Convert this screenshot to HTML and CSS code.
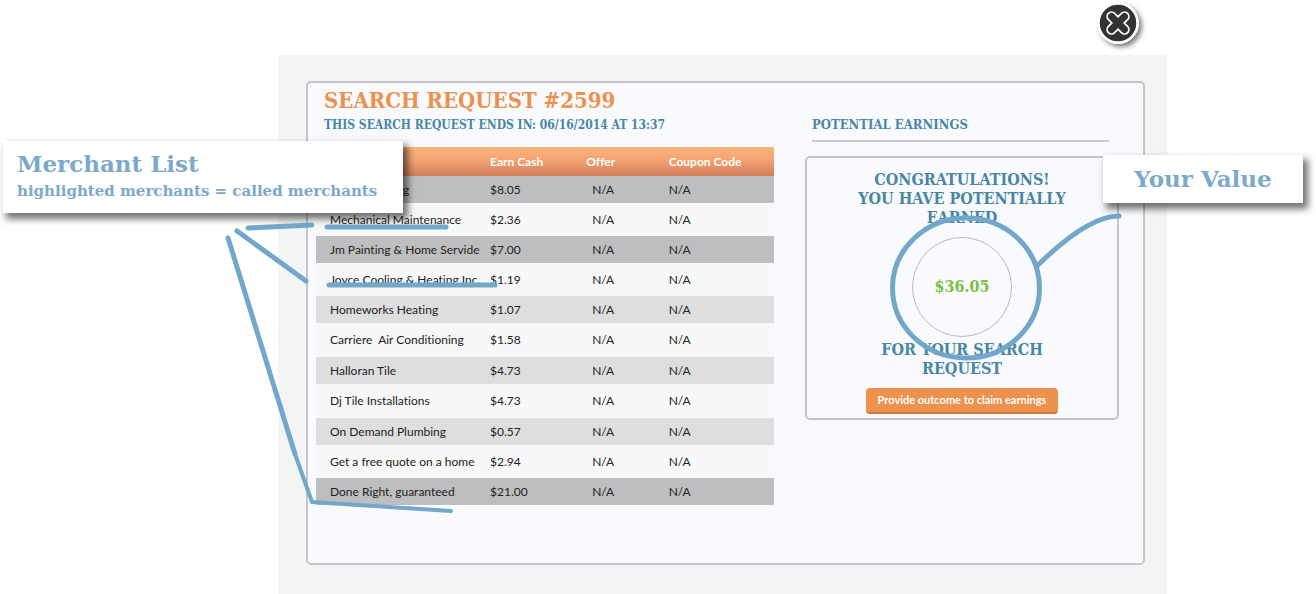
FILE: index.html
```html
<!DOCTYPE html>
<html lang="en">
<head>
<meta charset="utf-8">
<title>Search Request #2599</title>
<link rel="stylesheet" href="styles.css">
</head>
<body>
<main class="page">
  <div class="panel">
    <button class="close" type="button" aria-label="Close">
      <svg width="42" height="42" viewBox="0 0 42 42" aria-hidden="true">
        <circle cx="21" cy="21" r="19.500" fill="#333" stroke="#fff" stroke-width="2.500"/>
        <path d="M14.500 14.500 L27.500 27.500 M27.500 14.500 L14.500 27.500" stroke="#fff" stroke-width="10.500" stroke-linecap="round"/>
        <path d="M14.500 14.500 L27.500 27.500 M27.500 14.500 L14.500 27.500" stroke="#333" stroke-width="7" stroke-linecap="round"/>
      </svg>
    </button>
    <section class="sheet">
      <header class="heading">
        <h1 class="title">SEARCH REQUEST #2599</h1>
      </header>
      <p class="subtitle ends">THIS SEARCH REQUEST ENDS IN: 06/16/2014 AT 13:37</p>
      <h2 class="subtitle earnings-title">POTENTIAL EARNINGS</h2>
      <table class="merchants">
        <colgroup><col class="c-name"><col class="c-cash"><col class="c-offer"><col class="c-code"></colgroup>
        <thead><tr><td></td><th scope="col">Earn Cash</th><th scope="col">Offer</th><th scope="col">Coupon Code</th></tr></thead>
        <tbody>
          <tr class="called"><td class="covered">g</td><td>$8.05</td><td>N/A</td><td>N/A</td></tr>
          <tr><td>Mechanical Maintenance</td><td>$2.36</td><td>N/A</td><td>N/A</td></tr>
          <tr class="called"><td>Jm Painting &amp; Home Servide</td><td>$7.00</td><td>N/A</td><td>N/A</td></tr>
          <tr><td>Joyce Cooling &amp; Heating Inc.</td><td>$1.19</td><td>N/A</td><td>N/A</td></tr>
          <tr class="shaded"><td>Homeworks Heating</td><td>$1.07</td><td>N/A</td><td>N/A</td></tr>
          <tr class="tall"><td>Carriere&nbsp; Air Conditioning</td><td>$1.58</td><td>N/A</td><td>N/A</td></tr>
          <tr class="shaded"><td>Halloran Tile</td><td>$4.73</td><td>N/A</td><td>N/A</td></tr>
          <tr class="tall"><td>Dj Tile Installations</td><td>$4.73</td><td>N/A</td><td>N/A</td></tr>
          <tr class="shaded"><td>On Demand Plumbing</td><td>$0.57</td><td>N/A</td><td>N/A</td></tr>
          <tr><td>Get a free quote on a home</td><td>$2.94</td><td>N/A</td><td>N/A</td></tr>
          <tr class="called"><td>Done Right, guaranteed</td><td>$21.00</td><td>N/A</td><td>N/A</td></tr>
        </tbody>
      </table>
      <div class="card">
        <p class="message">CONGRATULATIONS!<br>YOU HAVE POTENTIALLY<br>EARNED</p>
        <div class="amount">$36.05</div>
        <p class="message">FOR YOUR SEARCH<br>REQUEST</p>
        <button class="claim" type="button">Provide outcome to claim earnings</button>
        <svg class="ring" width="240" height="160" viewBox="0 0 240 160" aria-hidden="true">
          <ellipse cx="82" cy="83" rx="73.500" ry="70"/>
          <path d="M154 60 Q204 11 235 11"/>
        </svg>
      </div>
    </section>
    <aside class="callout callout-list">
      <p class="callout-title">Merchant List</p>
      <p class="callout-note">highlighted merchants = called merchants</p>
    </aside>
    <aside class="callout callout-value"><p class="callout-title">Your Value</p></aside>
    <svg class="lines" width="280" height="300" viewBox="220 220 280 300" aria-hidden="true">
      <path d="M248 228 L312 225 M237 231 L306 281 M327 227 H446 M329 285 H495"/>
      <path d="M228 238 L295 454"/>
      <path class="thin" d="M295 454 L312 502 L451 511"/>
    </svg>
  </div>
</main>
</body>
</html>
```
FILE: styles.css
```css
* { box-sizing: border-box; }
body { margin: 0; background: #fff; color: #222; font: 12px/16px Lato, sans-serif; font-variant-ligatures: none; }
h1, h2, p { margin: 0; }
.page { min-height: 100vh; padding: 55px 149px 0 278px; display: flex; overflow: hidden; }
.panel { position: relative; flex: 1; padding: 26px 22px 29px 28px; background: #f3f5f5; }
.sheet {
  height: 100%; display: grid; grid-template-columns: 458fr 314fr; column-gap: 31px;
  grid-template-rows: 32px 32px 1fr; padding: 0 24px 57px 8px;
  border: 2px solid #c3c5c8; border-radius: 5px; background: #f9fafd;
}
.heading { grid-column: 1 / -1; padding: 3px 8px 0; }
.title { font: bold 22px/28px "DejaVu Serif Condensed", "DejaVu Serif", serif; color: #eb924f; white-space: nowrap; }
.subtitle { font: bold 12px/20px "DejaVu Serif Condensed", "DejaVu Serif", serif; color: #4886a5; white-space: nowrap; }
.ends { margin-left: 8px; }
.earnings-title { margin: 0 10px 5px 7px; border-bottom: 2px solid #c8cacd; font-size: 13px; }

.merchants { width: 100%; align-self: start; border-collapse: collapse; table-layout: fixed; background: #f7f9f8; }
.c-name { width: 38%; }
.c-cash { width: 21%; }
.c-offer { width: 18%; }
.c-code { width: 23%; }
.merchants th, .merchants td { padding: 0; text-align: left; white-space: nowrap; }
.merchants thead tr { height: 29px; background: linear-gradient(#fab67c, #f5a272 45%, #cf7d5b); color: #fff; }
.merchants tbody tr { height: 33px; }
.merchants tbody tr.tall { height: 34px; }
.merchants tbody tr.called { height: 27px; background: #bdbec0; }
.merchants tbody tr.shaded { height: 27px; background: #dedede; }
.merchants td:first-child { padding-left: 14px; }
.merchants td.covered { padding-left: 87px; }
.merchants tbody td:nth-child(3) { padding-left: 6px; }

.card {
  position: relative; align-self: start; margin-top: 9px;
  border: 2px solid #c3c5c8; border-radius: 5px; padding: 12px 0 4px;
  display: flex; flex-direction: column; align-items: center;
}
.message { text-align: center; font: bold 16px/19px "DejaVu Serif Condensed", "DejaVu Serif", serif; color: #4886a5; }
.amount {
  width: 100px; height: 100px; margin: 10px 0 3px; border: 1px solid #b9babc; border-radius: 50%;
  display: grid; place-items: center; color: #7abf43;
  font: bold 16px/20px "DejaVu Serif Condensed", "DejaVu Serif", serif;
}
.claim {
  margin-top: 10px; height: 26px; padding: 0 12px; border: 0; border-bottom: 2px solid #cf793c;
  border-radius: 4px; background: #ec914e; color: #fff; font: bold 11px/16px Lato, sans-serif;
}
.ring { position: absolute; left: 77px; top: 47px; pointer-events: none; overflow: visible; }
.ring, .lines { fill: none; stroke: #73a7ca; stroke-width: 5; stroke-linecap: round; stroke-linejoin: round; }
.thin { stroke-width: 4; }
.lines { position: absolute; left: -58px; top: 165px; pointer-events: none; }

.callout { position: absolute; background: #fff; color: #7ca9c9; box-shadow: 4px 5px 7px 1px rgba(0, 0, 0, .55); white-space: nowrap; font-family: "DejaVu Serif", serif; font-weight: bold; }
.callout-list { left: -275px; top: 86px; width: 400px; padding: 9px 14px; height: 72px; }
.callout-value { right: -136px; top: 100px; width: 200px; padding: 10px 0; text-align: center; }
.callout-title { font-size: 23px; line-height: 28px; }
.callout-note { font-size: 15px; line-height: 26px; }
.close { position: absolute; right: 28px; top: -53px; width: 42px; height: 42px; padding: 0; border: 0; border-radius: 50%; background: #fff; box-shadow: 3px 3px 5px rgba(0, 0, 0, .5); }
.close svg { display: block; }
```
